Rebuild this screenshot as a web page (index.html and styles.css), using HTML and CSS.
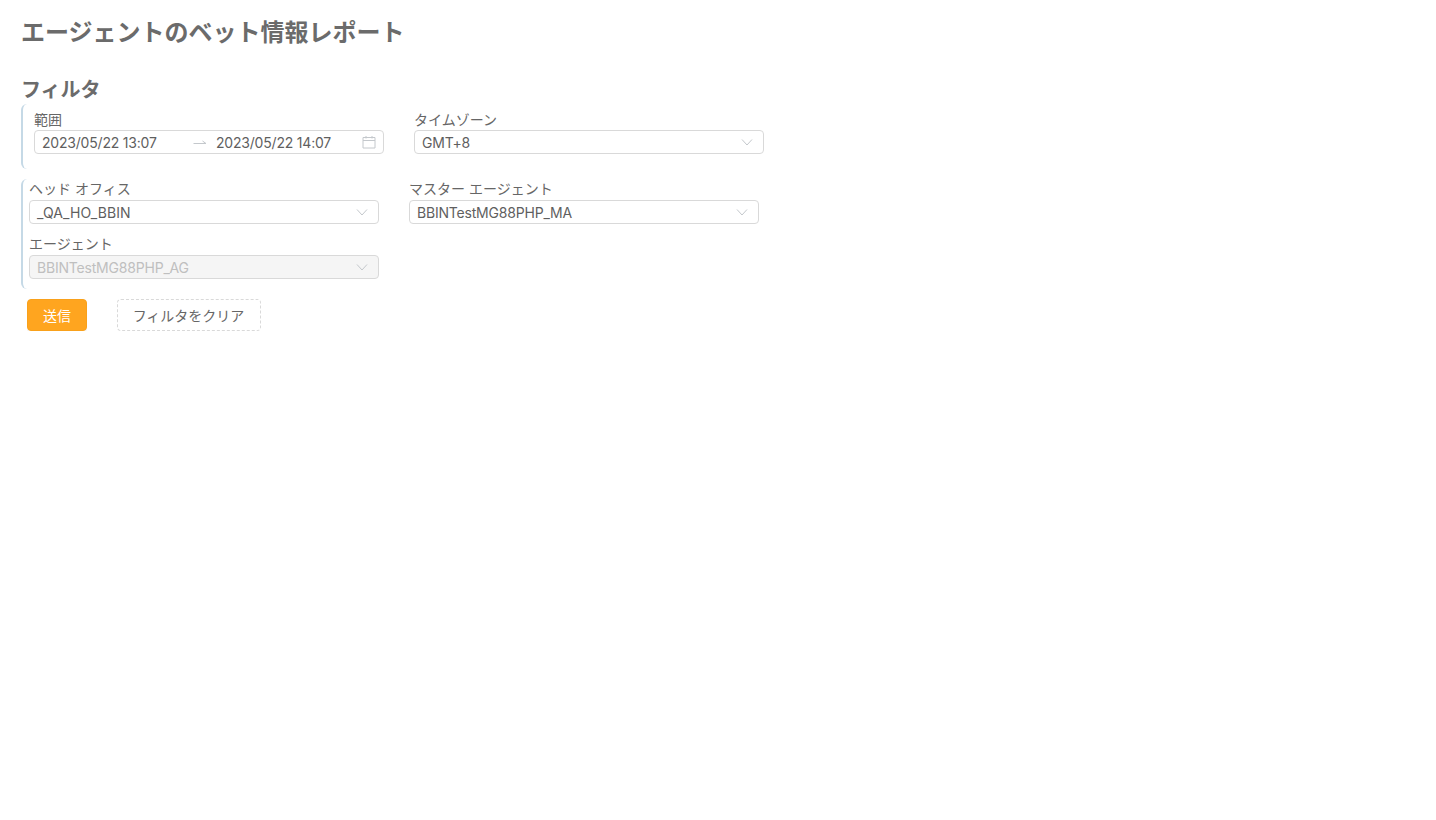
FILE: index.html
```html
<!DOCTYPE html>
<html lang="ja">
<head>
<meta charset="utf-8">
<title>エージェントのベット情報レポート</title>
<link rel="stylesheet" href="styles.css">
</head>
<body>
<main class="page">
  <h1 class="title">エージェントのベット情報レポート</h1>
  <h2 class="subtitle">フィルタ</h2>
  <section class="group group-a">
    <div class="fields">
      <div class="field">
        <label class="label">範囲</label>
        <div class="control range">
          <span class="range-val">2023/05/22 13:07</span>
          <svg class="arrow" width="14" height="8" viewBox="0 0 14 8"><path d="M0.5 4.5H13L9.5 2" fill="none" stroke="#c4c8cc" stroke-width="1"/></svg>
          <span class="range-end">2023/05/22 14:07</span>
          <svg class="cal" width="14" height="14" viewBox="0 0 14 14"><path d="M1 2.5H13V13H1ZM1 5.5H13M4 1V3.5M10 1V3.5" fill="none" stroke="#c4c8cc" stroke-width="1"/></svg>
        </div>
      </div>
      <div class="field">
        <label class="label">タイムゾーン</label>
        <div class="control select"><span>GMT+8</span><svg class="chev" width="12" height="8" viewBox="0 0 12 8"><path d="M1 1.5L6 7L11 1.5" fill="none" stroke="#c4c8cc" stroke-width="1"/></svg></div>
      </div>
    </div>
  </section>
  <section class="group group-b">
    <div class="fields">
      <div class="field">
        <label class="label">ヘッド オフィス</label>
        <div class="control select"><span class="wide-val">_QA_HO_BBIN</span><svg class="chev" width="12" height="8" viewBox="0 0 12 8"><path d="M1 1.5L6 7L11 1.5" fill="none" stroke="#c4c8cc" stroke-width="1"/></svg></div>
      </div>
      <div class="field">
        <label class="label">マスター エージェント</label>
        <div class="control select"><span>BBINTestMG88PHP_MA</span><svg class="chev" width="12" height="8" viewBox="0 0 12 8"><path d="M1 1.5L6 7L11 1.5" fill="none" stroke="#c4c8cc" stroke-width="1"/></svg></div>
      </div>
      <div class="field">
        <label class="label">エージェント</label>
        <div class="control select disabled"><span>BBINTestMG88PHP_AG</span><svg class="chev" width="12" height="8" viewBox="0 0 12 8"><path d="M1 1.5L6 7L11 1.5" fill="none" stroke="#c4c8cc" stroke-width="1"/></svg></div>
      </div>
    </div>
  </section>
  <div class="actions">
    <button class="btn primary" type="button">送信</button>
    <button class="btn dashed" type="button">フィルタをクリア</button>
  </div>
</main>
</body>
</html>
```
FILE: styles.css
```css
* { box-sizing: border-box; }
html, body { margin: 0; padding: 0; background: #fff; }
body {
  font-family: Inter, "Noto Sans CJK JP", sans-serif;
  font-size: 14px;
  color: #666;
}
.page { padding: 16px 0 0 21px; }
.title {
  margin: 0;
  font-size: 24px;
  line-height: 34px;
  font-weight: 600;
  color: #6b6b6b;
}
.subtitle {
  margin: 25px 0 0;
  font-size: 20px;
  line-height: 31px;
  height: 29px;
  font-weight: 600;
  color: #6b6b6b;
}
.group {
  border-left: 2px solid #c5d9e6;
  border-radius: 6px;
}
.group-a { padding: 5px 0 15px 11px; height: 65px; }
.group-b { margin-top: 10px; padding: 0 0 10px 6px; height: 110px; }
.fields {
  display: grid;
  grid-template-columns: 350px 350px;
  column-gap: 30px;
  row-gap: 9px;
}
.label {
  display: block;
  height: 21px;
  line-height: 21px;
  font-size: 14px;
  color: #666;
}
.group-b .label { height: 22px; line-height: 22px; margin-top: -1px; }
.group-b .field + .field + .field .label { margin-top: 0; }
.control {
  display: flex;
  align-items: center;
  height: 24px;
  padding: 1px 7px 0;
  border: 1px solid #d9d9d9;
  border-radius: 4px;
  background: #fff;
  line-height: 22px;
  letter-spacing: -0.2px;
  color: #5f5f5f;
}
.wide-val { letter-spacing: 0.1px; }
.select { justify-content: space-between; padding-right: 10px; }
.range-val { flex: none; width: 151px; white-space: nowrap; }
.range-end { flex: none; white-space: nowrap; }
.arrow { flex: none; margin-right: 9px; }
.cal { flex: none; margin-left: auto; margin-top: -1px; }
.chev { margin-top: -1px; }
.disabled { background: #f5f5f5; color: #bfbfbf; }
.actions { display: flex; gap: 30px; margin: 10px 0 0 6px; }
.btn {
  height: 32px;
  font-family: inherit;
  font-size: 14px;
  border-radius: 4px;
  padding: 0;
  cursor: pointer;
}
.primary {
  width: 60px;
  background: #ffa51f;
  border: 1px solid #f9a11b;
  color: #fff;
  box-shadow: 0 2px 0 rgba(0,0,0,.04);
}
.dashed {
  width: 144px;
  background: #fff;
  border: 1px dashed #d9d9d9;
  color: #666;
  padding-right: 1px;
}
```
